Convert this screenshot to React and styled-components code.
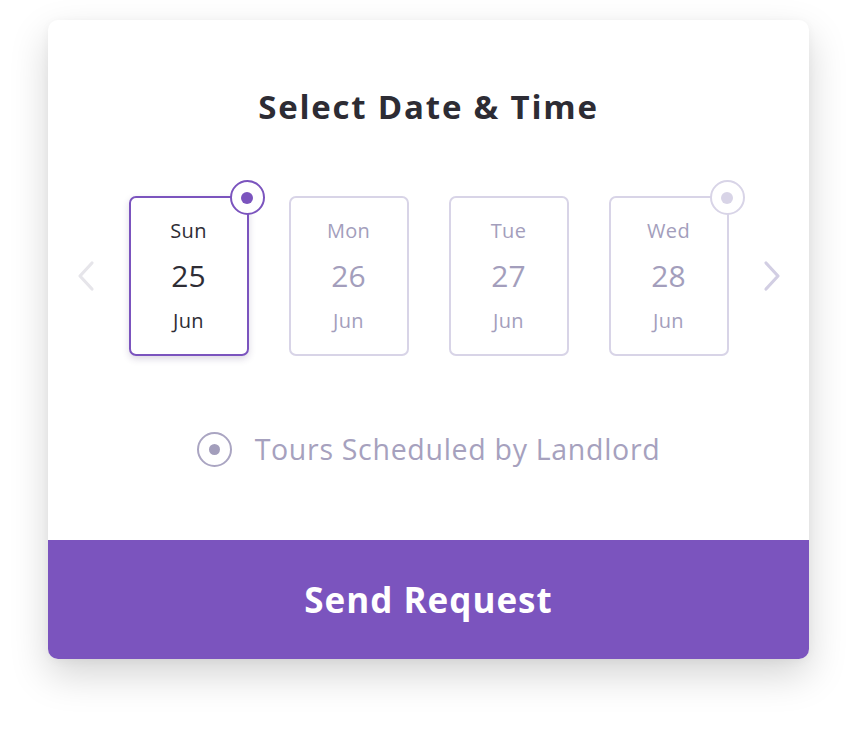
import React, { useState } from 'react';
import styled, { createGlobalStyle } from 'styled-components';

const GlobalStyle = createGlobalStyle`
  body {
    margin: 0;
    background: #ffffff;
    font-family: 'Open Sans', 'Lato', sans-serif;
  }
`;

const Page = styled.div`
  min-height: 736px;
  box-sizing: border-box;
  padding: 20px 0 0 48px;
`;

const Card = styled.div`
  width: 761px;
  height: 639px;
  background: #ffffff;
  border-radius: 10px;
  box-shadow: 0 16px 38px rgba(0, 0, 0, 0.17), 0 2px 10px rgba(0, 0, 0, 0.04);
  display: flex;
  flex-direction: column;
  overflow: hidden;
`;

const Body = styled.div`
  flex: 1;
  display: flex;
  flex-direction: column;
  align-items: center;
  padding-top: 67px;
`;

const Title = styled.h1`
  margin: 0;
  font-size: 33px;
  line-height: 40px;
  font-weight: 700;
  color: #2d2c34;
  letter-spacing: 1.8px;
`;

const DateRow = styled.div`
  display: flex;
  align-items: center;
  gap: 28px;
  margin-top: 69px;
`;

const Arrow = styled.button`
  width: 30px;
  height: 40px;
  padding: 0;
  border: none;
  background: none;
  display: flex;
  align-items: center;
  justify-content: center;
  cursor: pointer;
  color: ${p => p.$color};
`;

const Days = styled.div`
  display: flex;
  gap: 40px;
`;

const Day = styled.div`
  position: relative;
  width: 120px;
  height: 160px;
  box-sizing: border-box;
  border: 2px solid ${p => (p.$active ? '#7b54be' : '#d8d4e7')};
  border-radius: 7px;
  box-shadow: ${p => (p.$active ? '0 3px 7px rgba(60, 40, 100, 0.18)' : 'none')};
  display: flex;
  flex-direction: column;
  align-items: center;
  justify-content: center;
  gap: 16px;
  color: ${p => (p.$active ? '#2e2d35' : '#a39ebc')};
  cursor: pointer;
`;

const DayName = styled.span`
  font-size: 20px;
  line-height: 24px;
  letter-spacing: 0.3px;
`;

const DayNum = styled.span`
  font-size: 30px;
  line-height: 34px;
`;

const Badge = styled.span`
  position: absolute;
  top: -18px;
  right: -18px;
  width: 35px;
  height: 35px;
  box-sizing: border-box;
  border-radius: 50%;
  background: #ffffff;
  border: 2px solid ${p => p.$color};
  display: flex;
  align-items: center;
  justify-content: center;

  &::after {
    content: '';
    width: 12px;
    height: 12px;
    border-radius: 50%;
    background: ${p => p.$color};
  }
`;

const TourRow = styled.label`
  display: flex;
  align-items: center;
  gap: 23px;
  margin-top: 75px;
  color: #a6a1be;
  font-size: 28.5px;
  line-height: 36px;
  letter-spacing: 0.7px;
  cursor: pointer;
`;

const Radio = styled.span`
  width: 35px;
  height: 35px;
  box-sizing: border-box;
  border-radius: 50%;
  border: 2px solid #aaa5c2;
  display: flex;
  align-items: center;
  justify-content: center;

  &::after {
    content: '';
    width: 11px;
    height: 11px;
    border-radius: 50%;
    background: #a39ebc;
  }
`;

const SendButton = styled.button`
  height: 119px;
  border: none;
  background: #7b54be;
  color: #ffffff;
  font-family: 'Open Sans', sans-serif;
  font-size: 35px;
  font-weight: 700;
  letter-spacing: 1px;
  cursor: pointer;
`;

const Chevron = ({ dir }) => (
  <svg width="20" height="32" viewBox="0 0 20 32" fill="none">
    <path
      d={dir === 'left' ? 'M16 3 L4 16 L16 29' : 'M4 3 L16 16 L4 29'}
      stroke="currentColor"
      strokeWidth="3.2"
      strokeLinecap="round"
      strokeLinejoin="round"
    />
  </svg>
);

const days = [
  { name: 'Sun', num: 25 },
  { name: 'Mon', num: 26 },
  { name: 'Tue', num: 27 },
  { name: 'Wed', num: 28 },
];

export default function App() {
  const [selected, setSelected] = useState(0);

  return (
    <Page>
      <GlobalStyle />
      <Card>
        <Body>
          <Title>Select Date &amp; Time</Title>
          <DateRow>
            <Arrow $color="#e6e5ea" aria-label="previous">
              <Chevron dir="left" />
            </Arrow>
            <Days>
              {days.map((d, i) => (
                <Day key={d.num} $active={i === selected} onClick={() => setSelected(i)}>
                  {i === selected && <Badge $color="#7b54be" />}
                  {i === 3 && i !== selected && <Badge $color="#d8d4e7" />}
                  <DayName>{d.name}</DayName>
                  <DayNum>{d.num}</DayNum>
                  <DayName>Jun</DayName>
                </Day>
              ))}
            </Days>
            <Arrow $color="#d2cee3" aria-label="next">
              <Chevron dir="right" />
            </Arrow>
          </DateRow>
          <TourRow>
            <Radio />
            Tours Scheduled by Landlord
          </TourRow>
        </Body>
        <SendButton>Send Request</SendButton>
      </Card>
    </Page>
  );
}
